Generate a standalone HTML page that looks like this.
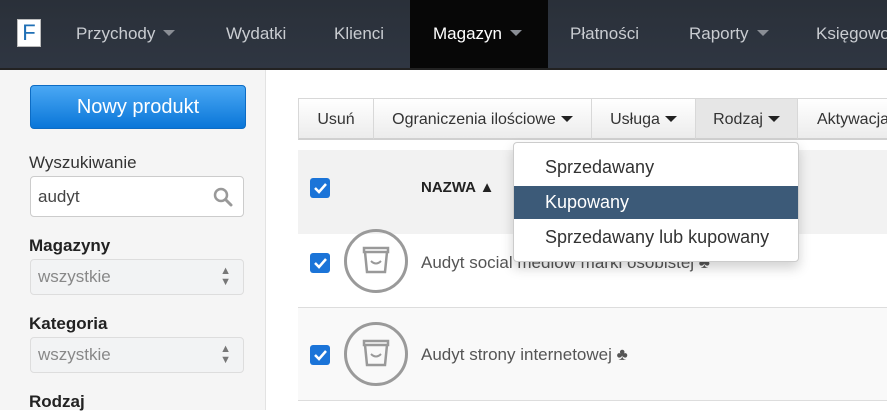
<!DOCTYPE html>
<html><head><style>
*{box-sizing:border-box;margin:0;padding:0}
body{width:887px;height:410px;overflow:hidden;font-family:"Liberation Sans",sans-serif;background:#fff;position:relative}
.nav{position:absolute;left:0;top:0;width:887px;height:70px;background:linear-gradient(#2a3039,#2f3642);border-bottom:2px solid #222}
.nav .it{position:absolute;top:0;height:68px;line-height:68px;color:#c9ccd1;font-size:17px;white-space:nowrap}
.car{display:inline-block;width:0;height:0;border-left:6px solid transparent;border-right:6px solid transparent;border-top:6px solid #8a8e95;vertical-align:middle;margin-left:8px;margin-top:-3px}
.logo{position:absolute;left:17px;top:19px;width:24px;height:28px;background:#fff;border:1px solid #bbb;color:#1f6fb5;font-size:22px;line-height:26px;text-align:center}
.side{position:absolute;left:0;top:70px;width:266px;height:340px;background:#f5f5f5;border-right:1px solid #e3e3e3}
.btn{position:absolute;left:30px;top:15px;width:216px;height:44px;border-radius:4px;background:linear-gradient(#4aa8f4,#0a76d8);border:1px solid #0d6cc4;color:#fff;font-size:20px;text-align:center;line-height:42px}
.lbl{position:absolute;left:29px;font-size:17px;color:#333}
.b{font-weight:bold;color:#222}
.inp{position:absolute;left:30px;width:214px;border:1px solid #ccc;border-radius:4px;font-size:17px}
.main .tb{position:absolute;top:98px;height:42px;line-height:42px;font-size:16px;color:#333;background:linear-gradient(#fff,#ececec);border:1px solid #d8d8d8;border-bottom:2px solid #d0d0d0;text-align:center;white-space:nowrap;overflow:hidden}
.dc{display:inline-block;border-left:6px solid transparent;border-right:6px solid transparent;border-top:6px solid #222;vertical-align:middle;margin-left:5px;margin-top:-2px}
.cb{position:absolute;left:310px;width:20px;height:20px;background:#1b74d8;border-radius:3px}
.ic{position:absolute;left:344px;width:64px;height:64px;border:3px solid #9a9a9a;border-radius:50%}
.row{position:absolute;left:298px;width:589px}
.dd{position:absolute;left:513px;top:142px;width:286px;height:120px;background:#fff;border:1px solid #ccc;border-radius:4px;box-shadow:0 6px 12px rgba(0,0,0,.18);font-size:18px;color:#333}
.dd div{position:absolute;left:0;width:100%;padding-left:31px;height:33px;line-height:33px}
.ar{position:absolute;right:12px;top:6px;font-size:11px;line-height:11px;color:#777}
</style></head><body>
<div class="nav">
<div class="logo">F</div>
<div class="it" style="left:76px">Przychody<span class="car"></span></div>
<div class="it" style="left:226px">Wydatki</div>
<div class="it" style="left:334px">Klienci</div>
<div class="it" style="left:410px;width:138px;background:#070707;color:#fff;padding-left:23px">Magazyn<span class="car"></span></div>
<div class="it" style="left:570px">Płatności</div>
<div class="it" style="left:689px">Raporty<span class="car"></span></div>
<div class="it" style="left:816px">Księgowość</div>
</div>
<div class="side">
<div class="btn">Nowy produkt</div>
<div class="lbl" style="top:83px">Wyszukiwanie</div>
<div class="inp" style="top:106px;height:41px;background:#fff;padding:10px 7px;color:#444">audyt
<svg style="position:absolute;right:10px;top:10px" width="20" height="20" viewBox="0 0 20 20"><circle cx="8" cy="8" r="6" fill="none" stroke="#999" stroke-width="2.5"/><path d="M12.5 12.5L18 18" stroke="#999" stroke-width="3" stroke-linecap="round"/></svg></div>
<div class="lbl b" style="top:166px">Magazyny</div>
<div class="inp" style="top:189px;height:36px;background:#f2f3f4;border-color:#ddd;padding:7px 7px;color:#888">wszystkie<span class="ar">▲<br>▼</span></div>
<div class="lbl b" style="top:244px">Kategoria</div>
<div class="inp" style="top:267px;height:36px;background:#f2f3f4;border-color:#ddd;padding:7px 7px;color:#888">wszystkie<span class="ar">▲<br>▼</span></div>
<div class="lbl b" style="top:322px">Rodzaj</div>
</div>
<div class="main">
<div class="tb" style="left:298px;width:76px">Usuń</div>
<div class="tb" style="left:373px;width:219px">Ograniczenia ilościowe<span class="dc"></span></div>
<div class="tb" style="left:591px;width:105px">Usługa<span class="dc"></span></div>
<div class="tb" style="left:695px;width:103px;background:#e6e6e6">Rodzaj<span class="dc"></span></div>
<div class="tb" style="left:797px;width:100px;text-align:left;padding-left:19px">Aktywacja</div>
<div class="row" style="top:150px;height:84px;background:#f2f2f2"></div>
<div class="row" style="top:234px;height:74px;background:#fff;border-bottom:1px solid #ddd"></div>
<div class="row" style="top:308px;height:93px;background:#f9f9f9;border-bottom:1px solid #ddd"></div>
<div class="cb" style="top:178px"><svg width="20" height="20"><path d="M5 10l4 4 7-8" stroke="#fff" stroke-width="2.5" fill="none"/></svg></div>
<div style="position:absolute;left:421px;top:179px;font-size:15px;font-weight:bold;color:#222">NAZWA ▲</div>
<div class="cb" style="top:253px"><svg width="20" height="20"><path d="M5 10l4 4 7-8" stroke="#fff" stroke-width="2.5" fill="none"/></svg></div>
<div class="ic" style="top:229px"><svg width="58" height="58" viewBox="0 0 58 58"><path d="M17 16h24v4H17z M18 20l2 20h18l2-20" fill="none" stroke="#999" stroke-width="2.5"/><path d="M24 29q5 5 10 0" fill="none" stroke="#999" stroke-width="2"/></svg></div>
<div style="position:absolute;left:421px;top:253px;font-size:17px;color:#555">Audyt social mediów marki osobistej ♣</div>
<div class="cb" style="top:345px"><svg width="20" height="20"><path d="M5 10l4 4 7-8" stroke="#fff" stroke-width="2.5" fill="none"/></svg></div>
<div class="ic" style="top:322px"><svg width="58" height="58" viewBox="0 0 58 58"><path d="M17 16h24v4H17z M18 20l2 20h18l2-20" fill="none" stroke="#999" stroke-width="2.5"/><path d="M24 29q5 5 10 0" fill="none" stroke="#999" stroke-width="2"/></svg></div>
<div style="position:absolute;left:421px;top:345px;font-size:17px;color:#555">Audyt strony internetowej ♣</div>
<div class="dd">
<div style="top:8px">Sprzedawany</div>
<div style="top:43px;background:#3c5a78;color:#fff">Kupowany</div>
<div style="top:78px">Sprzedawany lub kupowany</div>
</div>
</div>
</body></html>
